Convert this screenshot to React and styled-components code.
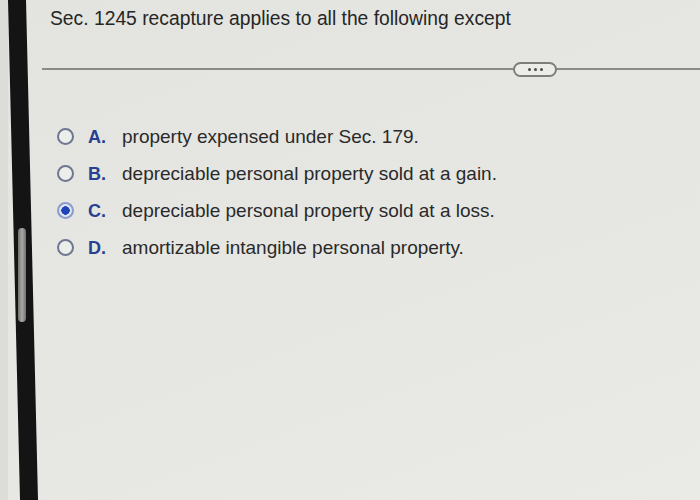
import styled, { createGlobalStyle } from 'styled-components';

const GlobalStyle = createGlobalStyle`
  html, body {
    margin: 0;
    padding: 0;
    background: #e4e5e0;
  }
  body {
    font-family: "Liberation Sans", Arial, sans-serif;
    color: #2e2e2e;
  }
`;

const options = [
  { letter: 'A.', text: 'property expensed under Sec. 179.', checked: false },
  { letter: 'B.', text: 'depreciable personal property sold at a gain.', checked: false },
  { letter: 'C.', text: 'depreciable personal property sold at a loss.', checked: true },
  { letter: 'D.', text: 'amortizable intangible personal property.', checked: false },
];

const App = () => {
  return (
    <>
      <GlobalStyle />
      <Screen>
        <Edge />
        <Bezel>
          <Thumb />
        </Bezel>
        <Page>
          <Question>Sec. 1245 recapture applies to all the following except</Question>
          <Divider>
            <Rule $width="471px" />
            <MoreButton>
              <Dot />
              <Dot />
              <Dot />
            </MoreButton>
            <Rule $grow />
          </Divider>
          <OptionList>
            {options.map(opt => (
              <Option key={opt.letter}>
                <Radio $checked={opt.checked} />
                <OptionLabel>
                  <Letter>{opt.letter}</Letter>
                  <OptionText>{opt.text}</OptionText>
                </OptionLabel>
              </Option>
            ))}
          </OptionList>
        </Page>
      </Screen>
    </>
  );
};

const Screen = styled.div`
  display: flex;
  flex-direction: row;
  width: 700px;
  height: 500px;
  overflow: hidden;
  background: linear-gradient(160deg, #e3e4df 0%, #e6e7e2 50%, #eaebe7 100%);
`;

const Edge = styled.div`
  width: 8px;
  flex-shrink: 0;
  background: #dcdcd8;
`;

const Bezel = styled.div`
  position: relative;
  width: 30px;
  height: 500px;
  flex-shrink: 0;
  background: #141414;
  clip-path: polygon(0 0, 18px 0, 30px 100%, 12px 100%);
`;

const Thumb = styled.div`
  position: absolute;
  left: 10px;
  top: 228px;
  width: 8px;
  height: 94px;
  border-radius: 4px;
  background: linear-gradient(90deg, #6f6f6c, #a9a9a5 50%, #707070);
`;

const Page = styled.div`
  flex: 1;
  display: flex;
  flex-direction: column;
  padding: 7px 0 0 12px;
`;

const Question = styled.div`
  font-size: 19.3px;
  line-height: 24px;
  color: #262626;
`;

const Divider = styled.div`
  display: flex;
  align-items: center;
  margin: 31px 0 0 -8px;
  height: 14px;
`;

const Rule = styled.div`
  height: 2px;
  background: #8b8a88;
  width: ${props => props.$width || 'auto'};
  flex: ${props => (props.$grow ? 1 : 'none')};
`;

const MoreButton = styled.div`
  display: flex;
  align-items: center;
  justify-content: center;
  gap: 3px;
  width: 40px;
  height: 11px;
  border: 2px solid #7d7d7b;
  border-radius: 8px;
  background: #ecece8;
`;

const Dot = styled.span`
  width: 3px;
  height: 3px;
  border-radius: 50%;
  background: #4c4c4c;
`;

const OptionList = styled.div`
  display: flex;
  flex-direction: column;
  gap: 14px;
  margin: 49px 0 0 7px;
`;

const Option = styled.div`
  display: flex;
  align-items: center;
  height: 23px;
`;

const OptionLabel = styled.div`
  display: flex;
  align-items: baseline;
  margin-left: 14px;
`;

const Radio = styled.span`
  box-sizing: border-box;
  width: 17px;
  height: 17px;
  border-radius: 50%;
  border: 2px solid ${props => (props.$checked ? '#8a9bcc' : '#6e7691')};
  background: ${props => (props.$checked ? 'radial-gradient(circle, #1f44b8 0 4px, #dfe4f1 4.5px)' : '#eceeea')};
  flex-shrink: 0;
`;

const Letter = styled.span`
  width: 34px;
  font-size: 18px;
  font-weight: bold;
  color: #27408f;
`;

const OptionText = styled.span`
  font-size: 19px;
  color: #2a2a2a;
`;

export default App;
